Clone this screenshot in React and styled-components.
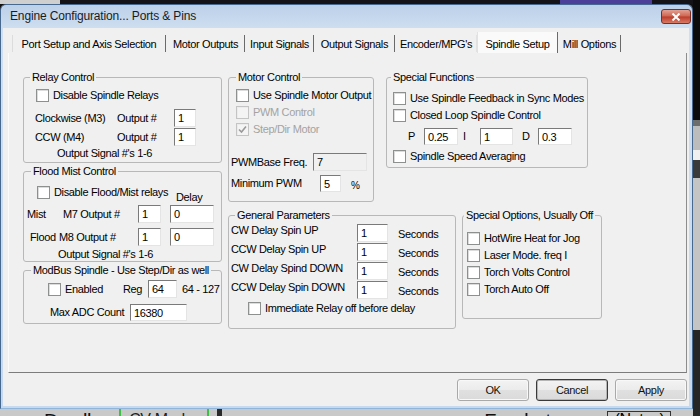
import React from "react";
import styled, { createGlobalStyle } from "styled-components";

const GlobalStyle = createGlobalStyle`
  html, body { margin: 0; padding: 0; background: #111; overflow: hidden; }
  body {
    font-family: "Liberation Sans", Arial, sans-serif;
    font-size: 11px;
    letter-spacing: -0.35px;
    color: #000;
  }
`;

const Desktop = styled.div`
  width: 700px;
  height: 416px;
  display: flex;
  overflow: hidden;
  background: #111;
`;

const Stage = styled.div`
  width: 693px;
  display: flex;
  flex-direction: column;
`;

const TopStrip = styled.div`
  height: 4px;
  background: linear-gradient(to right, #cfcfcf 0 60px, #141418 60px 560px, #4b3f9a 560px 652px, #141418 652px);
`;

const SideStrip = styled.div`
  width: 7px;
  flex: none;
  background: linear-gradient(#0b0b0b 0 120px, #6d6d6d 120px 126px, #bcbcbc 126px 150px, #efefef 150px 160px, #3a3a3a 160px 178px, #c4c4c4 178px 330px, #262626 330px);
`;

const Window = styled.div`
  box-sizing: border-box;
  width: 693px;
  height: 405px;
  border: 1px solid #47698f;
  border-bottom-color: #8fb6da;
  border-radius: 6px 6px 0 0;
  background: linear-gradient(#bcd0e8, #d0e0f2 26px, #c6d9ee);
  padding: 0 3px 2px 2px;
  display: flex;
  flex-direction: column;
`;

const TitleBar = styled.div`
  height: 23px;
  display: flex;
  justify-content: space-between;
  padding-left: 7px;
`;

const Title = styled.span`
  font-size: 12px;
  letter-spacing: -0.15px;
  line-height: 23px;
  color: #1b1b1b;
`;

const Close = styled.div`
  box-sizing: border-box;
  width: 30px;
  height: 15px;
  margin: 4px -2px 0 0;
  border: 1px solid #7a2f25;
  border-radius: 3px;
  background: linear-gradient(#e2a093, #cf6552 48%, #bd3b2a 52%, #d67a64);
  display: flex;
  align-items: center;
  justify-content: center;
`;

const Client = styled.div`
  box-sizing: border-box;
  flex: 1;
  background: #f0f0f0;
  padding: 4px 2px 5px 5px;
  display: flex;
  flex-direction: column;
`;

const TabStrip = styled.div`
  height: 21px;
  margin-left: 4px;
  display: flex;
  align-items: flex-end;
`;

const Tab = styled.div`
  box-sizing: border-box;
  width: ${(p) => p.$w}px;
  height: ${(p) => (p.$active ? 21 : 17)}px;
  margin-bottom: ${(p) => (p.$active ? 0 : 1)}px;
  padding-top: ${(p) => (p.$active ? 2 : 0)}px;
  display: flex;
  align-items: center;
  justify-content: center;
  white-space: nowrap;
  background: ${(p) => (p.$active ? "#fafafa" : "transparent")};
  border-left: 1px solid ${(p) => (p.$first ? "#dcdcdc" : p.$active ? "#e2e2e2" : "transparent")};
  border-right: ${(p) => (p.$sep ? "1px solid #6a6a6a" : "1px solid #e2e2e2")};
`;

const Panel = styled.div`
  box-sizing: border-box;
  width: 679px;
  height: 320px;
  border-left: 1px solid #fbfbfb;
  border-right: 1px solid #8d8d8d;
  border-bottom: 1px solid #7c7c7c;
  padding: 18px 0 0 14px;
  display: flex;
`;

const Column = styled.div`
  display: flex;
  flex-direction: column;
  gap: ${(p) => p.$gap}px;
  margin-left: ${(p) => p.$ml || 0}px;
`;

const GroupRow = styled.div`
  display: flex;
  align-items: flex-start;
  gap: ${(p) => p.$gap}px;
`;

const Group = styled.fieldset`
  box-sizing: border-box;
  width: ${(p) => p.$w}px;
  height: ${(p) => p.$h}px;
  min-width: 0;
  margin: 0;
  padding: 0;
  border: 1px solid #b8b8b8;
  border-radius: 3px;
`;

const Legend = styled.legend`
  padding: 0 2px;
  margin-left: ${(p) => (p.$lm ?? 6)}px;
  line-height: 13px;
  white-space: nowrap;
`;

const Row = styled.div`
  display: flex;
  align-items: ${(p) => p.$align || "center"};
  height: ${(p) => p.$h}px;
  margin-top: ${(p) => p.$mt || 0}px;
  padding-left: ${(p) => p.$ml || 0}px;
`;

const Text = styled.span`
  display: block;
  flex-shrink: 0;
  width: ${(p) => (p.$w ? `${p.$w}px` : "auto")};
  margin-left: ${(p) => p.$ml || 0}px;
  margin-top: ${(p) => p.$mt || 0}px;
  line-height: 13px;
  white-space: nowrap;
`;

const Small = styled.span`
  font-size: 10px;
  margin-left: 10px;
  margin-top: 4px;
`;

const Field = styled.input`
  box-sizing: border-box;
  flex-shrink: 0;
  width: ${(p) => p.$w}px;
  height: ${(p) => p.$h || 18}px;
  margin: 0 0 0 ${(p) => p.$ml || 0}px;
  padding: 0 0 0 3px;
  border: 1px solid;
  border-color: #7a7a7a #e4e4e4 #e4e4e4 #7a7a7a;
  background: ${(p) => (p.disabled ? "#f0f0f0" : "#fff")};
  font-family: "Liberation Sans", Arial, sans-serif;
  font-size: 11px;
  letter-spacing: -0.35px;
  color: #000;
  outline: none;
`;

const CheckLabel = styled.label`
  display: flex;
  align-items: center;
  gap: 4px;
  flex-shrink: 0;
  width: ${(p) => (p.$w ? `${p.$w}px` : "auto")};
  white-space: nowrap;
  line-height: 13px;
  color: ${(p) => (p.$disabled ? "#a3a3a3" : "#000")};
`;

const Box = styled.span`
  box-sizing: border-box;
  width: 13px;
  height: 13px;
  flex: none;
  border: 1px solid ${(p) => (p.$disabled ? "#c4c4c4" : "#8e8f8f")};
  background: ${(p) => (p.$disabled ? "#f4f4f4" : "#fff")};
  box-shadow: inset 1px 1px 0 ${(p) => (p.$disabled ? "#ececec" : "#dcdcdc")};
  display: flex;
  align-items: center;
  justify-content: center;
`;

const ButtonRow = styled.div`
  display: flex;
  justify-content: flex-end;
  gap: 7px;
  margin-top: 6px;
`;

const Button = styled.button`
  box-sizing: border-box;
  width: 72px;
  height: 22px;
  padding: 0;
  border: 1px solid ${(p) => (p.$default ? "#3a3a3a" : "#a9a9a9")};
  border-radius: 3px;
  box-shadow: ${(p) => (p.$default ? "inset 0 0 0 1px #b5b5b5" : "inset 0 0 0 1px #f8f8f8")};
  background: linear-gradient(#f3f3f3, #ebebeb 50%, #e0e0e0 51%, #dadada);
  font-family: "Liberation Sans", Arial, sans-serif;
  font-size: 11px;
  letter-spacing: -0.35px;
  color: #111;
`;

const BackApp = styled.div`
  height: 7px;
  overflow: hidden;
  display: flex;
  align-items: flex-start;
  background: #c9c9c9;
`;

const BackText = styled.span`
  margin-left: ${(p) => p.$ml}px;
  margin-top: 2px;
  font-size: 20px;
  line-height: 20px;
  color: #111;
  white-space: nowrap;
`;

const ModeBox = styled.span`
  box-sizing: border-box;
  width: 90px;
  height: 7px;
  margin-left: 28px;
  padding: 3px 0 0 8px;
  border-left: 2px solid #3fbf4a;
  border-right: 2px solid #3fbf4a;
  font-size: 16px;
  line-height: 16px;
  color: #222;
`;

const DarkBar = styled.span`
  width: 5px;
  height: 7px;
  margin-left: 8px;
  background: #2a2a2a;
`;

const NotesBox = styled.span`
  margin-left: 46px;
  margin-top: 2px;
  padding: 0 6px;
  border: 1px solid #333;
  font-size: 16px;
  line-height: 16px;
`;

function Check({ label, checked, disabled, w }) {
  return (
    <CheckLabel $w={w} $disabled={disabled}>
      <Box $disabled={disabled}>
        {checked && (
          <svg width="9" height="9" viewBox="0 0 9 9">
            <path d="M1 4.5 L3.5 7 L8 1.5" fill="none" stroke={disabled ? "#9a9a9a" : "#222"} strokeWidth="1.6" />
          </svg>
        )}
      </Box>
      <span>{label}</span>
    </CheckLabel>
  );
}

const tabs = [
  { label: "Port Setup and Axis Selection", w: 154, first: true },
  { label: "Motor Outputs", w: 79 },
  { label: "Input Signals", w: 69 },
  { label: "Output Signals", w: 81 },
  { label: "Encoder/MPG's", w: 82, nosep: true },
  { label: "Spindle Setup", w: 81, active: true },
  { label: "Mill Options", w: 63 },
];

const params = ["CW Delay Spin UP", "CCW Delay Spin UP", "CW Delay Spind DOWN", "CCW Delay Spin DOWN"];
const options = ["HotWire Heat for Jog", "Laser Mode. freq I", "Torch Volts Control", "Torch Auto Off"];

export default function App() {
  return (
    <Desktop>
      <GlobalStyle />
      <Stage>
        <TopStrip />
        <Window>
          <TitleBar>
            <Title>Engine Configuration... Ports &amp; Pins</Title>
            <Close>
              <svg width="10" height="8" viewBox="0 0 10 8">
                <path d="M1.5 0.5 L8.5 7.5 M8.5 0.5 L1.5 7.5" stroke="#fff" strokeWidth="2" />
              </svg>
            </Close>
          </TitleBar>
          <Client>
            <TabStrip>
              {tabs.map((t) => (
                <Tab key={t.label} $w={t.w} $active={t.active} $first={t.first} $sep={!t.nosep}>
                  {t.label}
                </Tab>
              ))}
            </TabStrip>
            <Panel>
              <Column $gap={2}>
                <Group $w={199} $h={92}>
                  <Legend>Relay Control</Legend>
                  <Row $mt={5} $ml={12} $h={13}>
                    <Check label="Disable Spindle Relays" />
                  </Row>
                  <Row $mt={7} $ml={11} $h={18}>
                    <Text $w={82}>Clockwise (M3)</Text>
                    <Text $w={57}>Output #</Text>
                    <Field $w={22} defaultValue="1" />
                  </Row>
                  <Row $mt={1} $ml={11} $h={18}>
                    <Text $w={82}>CCW (M4)</Text>
                    <Text $w={57}>Output #</Text>
                    <Field $w={22} defaultValue="1" />
                  </Row>
                  <Row $mt={1} $ml={33} $h={13}>
                    <Text>Output Signal #'s 1-6</Text>
                  </Row>
                </Group>

                <Group $w={199} $h={97}>
                  <Legend $lm={7}>Flood Mist Control</Legend>
                  <Row $mt={8} $ml={13} $h={18} $align="flex-start">
                    <Check label="Disable Flood/Mist relays" w={139} />
                    <Text $mt={5}>Delay</Text>
                  </Row>
                  <Row $mt={1} $ml={3} $h={18}>
                    <Text $w={36}>Mist</Text>
                    <Text $w={75}>M7 Output #</Text>
                    <Field $w={23} defaultValue="1" />
                    <Field $w={44} $ml={9} defaultValue="0" />
                  </Row>
                  <Row $mt={5} $ml={6} $h={18}>
                    <Text $w={29}>Flood</Text>
                    <Text $w={79}>M8 Output #</Text>
                    <Field $w={23} defaultValue="1" />
                    <Field $w={44} $ml={9} defaultValue="0" />
                  </Row>
                  <Row $mt={2} $ml={34} $h={13}>
                    <Text>Output Signal #'s 1-6</Text>
                  </Row>
                </Group>

                <Group $w={199} $h={60}>
                  <Legend $lm={7}>ModBus Spindle - Use Step/Dir as well</Legend>
                  <Row $mt={3} $ml={24} $h={18}>
                    <Check label="Enabled" w={75} />
                    <Text $w={25}>Reg</Text>
                    <Field $w={29} defaultValue="64" />
                    <Text $ml={5}>64 - 127</Text>
                  </Row>
                  <Row $mt={6} $ml={26} $h={17}>
                    <Text $w={80}>Max ADC Count</Text>
                    <Field $w={57} $h={17} defaultValue="16380" />
                  </Row>
                </Group>
              </Column>

              <Column $gap={7} $ml={6}>
                <GroupRow $gap={12}>
                  <Group $w={146} $h={131}>
                    <Legend $lm={7}>Motor Control</Legend>
                    <Row $mt={5} $ml={7} $h={13}>
                      <Check label="Use Spindle Motor Output" />
                    </Row>
                    <Row $mt={4} $ml={7} $h={13}>
                      <Check label="PWM Control" disabled />
                    </Row>
                    <Row $mt={4} $ml={7} $h={13}>
                      <Check label="Step/Dir Motor" disabled checked />
                    </Row>
                    <Row $mt={17} $ml={2} $h={18}>
                      <Text $w={82}>PWMBase Freq.</Text>
                      <Field $w={54} disabled defaultValue="7" />
                    </Row>
                    <Row $mt={4} $ml={2} $h={17}>
                      <Text $w={89}>Minimum PWM</Text>
                      <Field $w={21} $h={17} defaultValue="5" />
                      <Small>%</Small>
                    </Row>
                  </Group>

                  <Group $w={202} $h={97}>
                    <Legend $lm={4}>Special Functions</Legend>
                    <Row $mt={8} $ml={6} $h={13}>
                      <Check label="Use Spindle Feedback in Sync Modes" />
                    </Row>
                    <Row $mt={4} $ml={6} $h={13}>
                      <Check label="Closed Loop Spindle Control" />
                    </Row>
                    <Row $mt={6} $ml={21} $h={17}>
                      <Text $w={16}>P</Text>
                      <Field $w={34} $h={17} defaultValue="0.25" />
                      <Text $w={17} $ml={5}>I</Text>
                      <Field $w={33} $h={17} defaultValue="1" />
                      <Text $w={16} $ml={9}>D</Text>
                      <Field $w={34} $h={17} defaultValue="0.3" />
                    </Row>
                    <Row $mt={5} $ml={6} $h={13}>
                      <Check label="Spindle Speed Averaging" />
                    </Row>
                  </Group>
                </GroupRow>

                <GroupRow $gap={6}>
                  <Group $w={228} $h={120}>
                    <Legend>General Parameters</Legend>
                    {params.map((p, i) => (
                      <Row key={p} $mt={i === 0 ? 2 : 1} $ml={2} $h={18} $align="flex-start">
                        <Text $w={126}>{p}</Text>
                        <Field $w={31} defaultValue="1" />
                        <Text $ml={10} $mt={4}>Seconds</Text>
                      </Row>
                    ))}
                    <Row $mt={3} $ml={19} $h={13}>
                      <Check label="Immediate Relay off before delay" />
                    </Row>
                  </Group>

                  <Group $w={140} $h={110}>
                    <Legend $lm={1}>Special Options, Usually Off</Legend>
                    {options.map((o, i) => (
                      <Row key={o} $mt={i === 0 ? 10 : 4} $ml={4} $h={13}>
                        <Check label={o} />
                      </Row>
                    ))}
                  </Group>
                </GroupRow>
              </Column>
            </Panel>
            <ButtonRow>
              <Button>OK</Button>
              <Button $default>Cancel</Button>
              <Button>Apply</Button>
            </ButtonRow>
          </Client>
        </Window>
        <BackApp>
          <BackText $ml={44}>Dwell</BackText>
          <ModeBox>CV Mode</ModeBox>
          <DarkBar />
          <BackText $ml={262}>Feedrate</BackText>
          <NotesBox>(Notes)</NotesBox>
        </BackApp>
      </Stage>
      <SideStrip />
    </Desktop>
  );
}
